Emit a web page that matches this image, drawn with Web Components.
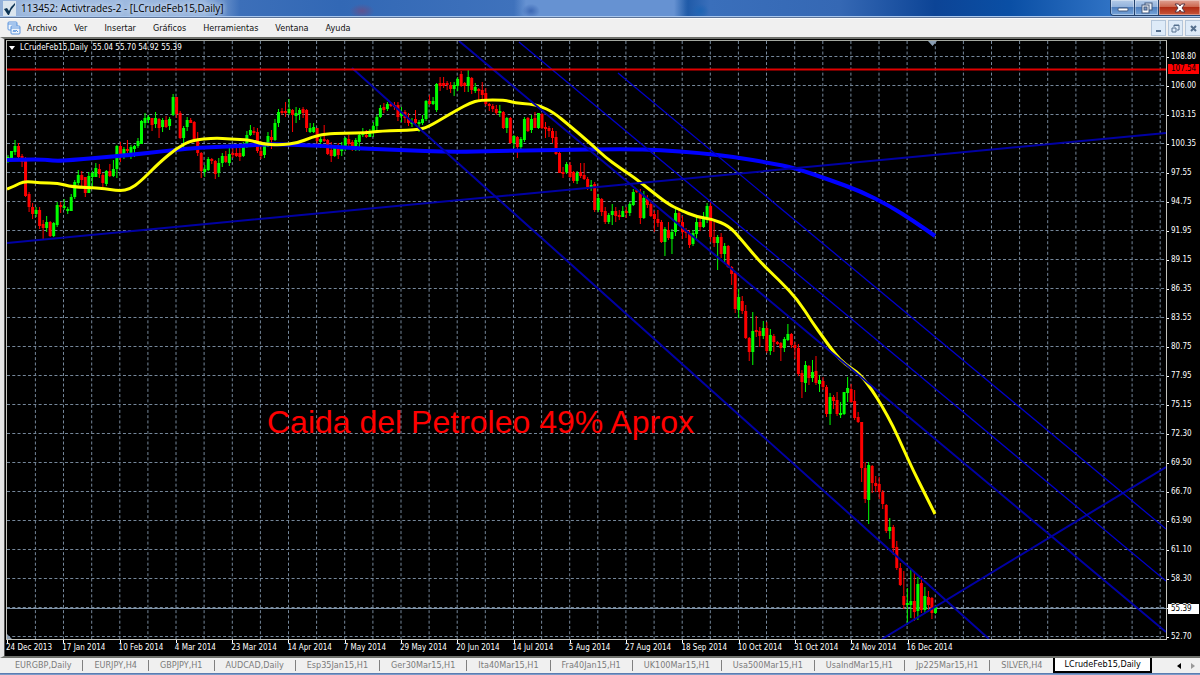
<!DOCTYPE html>
<html lang="es">
<head>
<meta charset="utf-8">
<title>113452: Activtrades-2 - [LCrudeFeb15,Daily]</title>
<style>
    html, body {
        height: 100%;
        margin: 0;
        overflow: hidden;
    }
    body {
        font-family: "Open Sans", "Noto Sans", sans-serif;
        background: #f0f0f0;
    }
</style>
</head>
<body>
<trading-terminal>
    <title-bar slot="title">113452: Activtrades-2 - [LCrudeFeb15,Daily]</title-bar>
    <menu-bar slot="menu" items="Archivo|Ver|Insertar|Gráficos|Herramientas|Ventana|Ayuda"></menu-bar>
    <price-chart slot="chart">
        <span slot="symbol">LCrudeFeb15,Daily&nbsp; 55.04 55.70 54.92 55.39</span>
        <span slot="note">Caida del Petroleo 49% Aprox</span>
    </price-chart>
    <chart-tabs slot="tabs" active="LCrudeFeb15,Daily" items="EURGBP,Daily|EURJPY,H4|GBPJPY,H1|AUDCAD,Daily|Esp35Jan15,H1|Ger30Mar15,H1|Ita40Mar15,H1|Fra40Jan15,H1|UK100Mar15,H1|Usa500Mar15,H1|UsaIndMar15,H1|Jp225Mar15,H1|SILVER,H4|LCrudeFeb15,Daily"></chart-tabs>
</trading-terminal>

<script>
class TradingTerminal extends HTMLElement {
    connectedCallback() {
        this.attachShadow({ mode: 'open' });
        this.shadowRoot.innerHTML = `
            <style>
                :host {
                    display: flex;
                    flex-direction: column;
                    height: 100vh;
                }
                .chart {
                    flex: 1;
                    min-height: 0;
                    display: flex;
                }
                .bottom {
                    height: 2px;
                    background: linear-gradient(#4a6ea6, #8eabd4);
                }
            </style>
            <slot name="title"></slot>
            <slot name="menu"></slot>
            <div class="chart"><slot name="chart"></slot></div>
            <slot name="tabs"></slot>
            <div class="bottom"></div>
        `;
    }
}

class TitleBar extends HTMLElement {
    connectedCallback() {
        this.attachShadow({ mode: 'open' });
        this.shadowRoot.innerHTML = `
            <style>
                :host {
                    display: flex;
                    align-items: center;
                    height: 17px;
                    padding-left: 3px;
                    border-bottom: 1px solid #5c7396;
                    box-shadow: inset 0 -1px #a9c6ec;
                    color: #000;
                    font-size: 10px;
                    line-height: 17px;
                    background:
                        radial-gradient(ellipse 14px 8px at 362px 11px, #5f5390 0%, transparent 90%),
                        radial-gradient(ellipse 10px 8px at 531px 11px, #3c68b4 0%, transparent 90%),
                        radial-gradient(ellipse 10px 8px at 700px 11px, #1d64b4 0%, transparent 90%),
                        linear-gradient(90deg, transparent 514px, #6692d2 526px, #6692d2 674px, transparent 688px),
                        linear-gradient(90deg, #93b0d9 0, #a5bfe2 60px, #94b2dc 205px, #3c6fb9 240px, #3268b5 340px, #3f72bc 515px, #1c58a6 685px, #3a6fbb 710px, #3568b4 840px, #0c4496 935px, #0a4fa5 1010px, #2f72c4 1110px, #6396d2 100%);
                }
                svg { display: block; }
                .logo {
                    width: 13px;
                    height: 15px;
                    margin-right: 5px;
                }
                .text {
                    flex: 1;
                    white-space: nowrap;
                    text-shadow: 0 0 5px #d8e4f4, 0 0 5px #d8e4f4;
                }
                .buttons {
                    display: flex;
                    align-self: flex-start;
                    height: 15px;
                    border: 1px solid #23426e;
                    border-top: 0;
                    border-right: 0;
                    border-radius: 0 0 0 4px;
                    overflow: hidden;
                }
                button {
                    display: flex;
                    align-items: center;
                    justify-content: center;
                    width: 24px;
                    padding: 0;
                    border: 0;
                    border-right: 1px solid #23426e;
                    box-shadow: inset 0 0 0 1px rgba(255, 255, 255, 0.35);
                    background: linear-gradient(#b3cae8 0, #93b3dc 45%, #4f7fbe 50%, #78a5d9 100%);
                }
                .close {
                    width: 41px;
                    border-right: 0;
                    background: linear-gradient(#dfa294 0, #cc6850 45%, #b02c14 50%, #c9563a 100%);
                }
            </style>
            <svg class="logo" viewBox="0 0 13 15">
                <rect width="13" height="15" fill="#dbe5ee"/>
                <path d="M1 8 L4 7 L6 10 Q8 5 12 2 L12 4 Q8 8 6 14 L5 14 Z" fill="#0d3454"/>
            </svg>
            <span class="text"><slot></slot></span>
            <div class="buttons">
                <button aria-label="Minimizar"><svg width="12" height="10" viewBox="0 0 12 10"><rect x="1" y="5" width="10" height="3" rx="1" fill="#fff" stroke="#43597c"/></svg></button>
                <button aria-label="Restaurar"><svg width="12" height="12" viewBox="0 0 12 12"><rect x="4" y="1" width="7" height="7" fill="#e8eef6" stroke="#43597c"/><rect x="1" y="3" width="7" height="8" fill="#fff" stroke="#43597c"/><rect x="3" y="5" width="3" height="3" fill="#7f9dc6" stroke="#43597c"/></svg></button>
                <button class="close" aria-label="Cerrar"><svg width="12" height="10" viewBox="0 0 12 10"><path d="M1 1h3.500l1.500 2 1.500-2h3.500l-3 4 3 4h-3.500l-1.500-2-1.500 2h-3.500l3-4z" fill="#fff" stroke="#5a3540"/></svg></button>
            </div>
        `;
    }
}

class MenuBar extends HTMLElement {
    connectedCallback() {
        this.attachShadow({ mode: 'open' });
        const items = this.getAttribute('items').split('|');
        this.shadowRoot.innerHTML = `
            <style>
                :host {
                    display: flex;
                    align-items: center;
                    height: 18px;
                    padding-left: 7px;
                    border-top: 1px solid #fafbfd;
                    background: #f0f0f0;
                    font-family: "DejaVu Sans Condensed", "DejaVu Sans", sans-serif;
                }
                .icon { margin-right: 6px; }
                nav {
                    flex: 1;
                    display: flex;
                    gap: 17px;
                }
                button {
                    padding: 0;
                    border: 0;
                    background: none;
                    color: #111;
                    font: inherit;
                    font-size: 9px;
                    line-height: 16px;
                }
                .mdi {
                    display: flex;
                    gap: 2px;
                }
                .mdi button {
                    display: flex;
                    align-items: center;
                    justify-content: center;
                    width: 15px;
                    height: 16px;
                    border: 1px solid #b4c6da;
                    background: #deebf8;
                }
                .mdi button:last-child { border-right: 0; }
            </style>
            <svg class="icon" width="14" height="14" viewBox="0 0 14 14" fill="#eef5fd" stroke="#5a94dd">
                <rect x="1" y="1" width="9" height="8" rx="1"/>
                <path d="M1 3h9" />
                <rect x="4" y="5" width="9" height="8" rx="1"/>
                <path d="M4 7h9M6 11l1-2 1 2 1-2 2 2" fill="none"/>
            </svg>
            <nav>${items.map(item => `<button>${item}</button>`).join('')}</nav>
            <div class="mdi">
                <button aria-label="Minimizar ventana"><svg width="9" height="9" viewBox="0 0 9 9"><path d="M2 7h5" stroke="#56708e" stroke-width="2"/></svg></button>
                <button aria-label="Restaurar ventana"><svg width="9" height="9" viewBox="0 0 9 9" fill="none" stroke="#56708e"><path d="M3 3V1h5v5H6M3 1.5h5"/><path d="M1 4h4v4H1z"/></svg></button>
                <button aria-label="Cerrar ventana"><svg width="9" height="9" viewBox="0 0 9 9"><path d="M2 2l5 5M7 2l-5 5" stroke="#56708e" stroke-width="2"/></svg></button>
            </div>
        `;
    }
}

// One bar per entry: direction, then high, low, body top and body bottom.
const BARS = `
g155 163 157 162,g151 158 151 158,g140 155 146 152,r143 158 146 157,r154 167 156 162,r157 197 161 196,r192 212 194 207,r203 219 207 214,
g207 217 210 214,r207 229 210 226,r220 239 224 228,g216 232 222 228,r221 237 222 236,g222 237 223 236,g202 227 205 225,r202 213 205 207,
g199 210 206 208,g207 214 209 211,g194 211 197 211,g180 199 182 197,g170 185 175 183,r171 188 175 180,r177 197 177 193,g172 193 176 193,
g171 187 173 177,g163 177 168 177,r164 178 169 174,r173 187 175 183,g170 186 171 184,r164 177 171 176,g160 177 169 176,g145 178 146 169,
r142 162 146 156,g147 159 149 156,r140 153 149 151,g145 159 147 155,g145 157 146 149,g138 148 141 146,g120 144 121 144,g113 128 118 123,
g115 123 117 120,r118 131 118 125,g112 128 118 124,r118 138 119 128,g118 132 120 127,r116 128 120 127,g117 130 119 126,g94 116 97 115,
r97 118 97 114,r111 139 113 138,g126 148 128 138,g117 131 120 127,r118 123 120 123,r121 140 122 139,r132 156 139 153,r152 178 153 171,
g165 177 169 172,g157 171 159 170,r158 164 159 161,r160 179 161 174,g158 177 163 173,g153 167 156 163,r151 163 156 162,g145 166 154 163,
r148 158 153 155,r145 157 153 156,r145 161 153 157,g142 157 145 156,g131 148 135 145,g125 136 130 135,r127 135 131 133,r128 153 132 151,
r141 159 151 156,g142 158 144 155,g132 147 136 145,r130 149 137 140,g119 141 123 140,g109 127 112 123,r108 115 111 113,r102 117 111 113,
g99 115 109 113,r109 132 110 115,g107 123 113 116,g108 120 110 114,r107 118 109 113,r109 132 110 128,g123 133 128 132,g123 133 127 132,
r128 145 128 141,g137 148 139 142,r125 142 139 141,r139 155 140 154,r142 162 150 156,g147 157 148 156,r143 159 148 155,g142 156 147 151,
g137 151 138 147,r135 148 139 144,r140 151 142 147,g138 151 140 146,g133 151 135 142,g128 137 133 135,r130 138 135 137,g129 137 131 137,
g122 137 126 131,g115 132 117 126,g105 118 108 117,r103 113 107 110,g102 111 104 109,r102 107 104 106,r102 110 105 107,r102 121 105 117,
g107 122 112 116,r110 123 112 118,r113 126 118 123,g118 127 122 124,r110 125 119 123,g120 132 122 124,g115 125 119 123,g100 121 101 119,
r95 105 101 104,g97 105 101 104,g83 112 84 110,r77 91 83 86,r77 88 83 86,r81 90 83 85,r82 93 85 89,g82 96 85 89,
g77 91 79 86,r71 87 74 86,r82 92 83 86,g70 92 77 86,r77 94 78 90,g83 93 87 91,r88 100 89 91,r82 100 90 95,
r88 106 93 104,r103 111 104 106,r104 112 106 109,r105 115 109 113,g105 117 111 113,r111 129 112 128,g117 133 118 128,r117 144 118 143,
g135 148 136 143,r136 158 137 147,g137 149 139 147,g117 142 119 140,r117 132 118 131,g115 133 119 130,r112 128 118 128,g113 129 113 128,
r113 129 114 128,r122 138 127 129,r126 137 128 131,r128 143 131 138,r131 155 137 154,r149 173 153 173,r167 178 172 174,g162 174 164 172,
r162 178 165 177,r171 183 172 181,g171 184 173 181,r163 178 172 176,r163 180 175 179,r177 190 179 187,g180 191 185 187,r182 212 184 210,
g194 212 198 210,r198 216 199 212,r207 224 211 222,g213 224 215 222,g204 225 211 215,r207 222 211 216,r210 220 215 217,g206 217 211 217,
r207 218 211 213,g202 216 204 213,g189 206 192 205,r189 193 190 192,r189 224 193 218,g191 219 198 218,r195 208 199 205,r200 217 204 216,
r211 232 214 219,r210 227 219 223,r220 243 222 242,g227 256 229 242,r222 240 230 238,g229 254 232 239,g208 236 213 232,r210 224 213 222,
r216 239 222 232,r228 238 230 233,r230 248 233 245,g230 246 233 244,g217 239 222 234,r217 231 222 227,g212 228 217 227,g203 223 206 220,
r201 242 206 237,r222 247 237 243,g235 270 237 243,r233 258 237 254,g243 264 246 254,r245 268 246 267,r266 285 267 274,r272 313 273 309,
g289 318 297 310,r296 314 301 311,r305 339 311 338,r337 361 338 352,g312 365 331 352,r316 337 330 332,r327 347 331 336,g321 339 328 336,
r322 353 328 351,g329 355 335 351,r334 352 336 342,r341 345 342 344,r342 361 343 348,g337 352 339 348,g324 341 334 340,r333 348 334 345,
r342 359 345 348,r344 376 348 374,r370 398 373 382,g361 392 365 383,r365 385 366 378,g360 382 372 378,r356 385 371 383,g375 392 380 384,
r377 390 381 387,r385 417 387 414,g393 425 397 414,r395 409 397 401,r392 416 400 414,g402 418 413 415,g392 415 392 414,g377 402 388 393,
r384 403 389 402,r390 420 401 418,r412 423 417 422,r422 482 422 468,r462 503 468 499,g462 524 465 500,r465 493 466 483,r476 492 483 486,
r477 499 484 492,r490 509 492 504,r504 533 505 531,g518 539 527 531,r525 555 527 548,r541 570 547 568,r563 586 568 585,r571 609 596 605,
g588 625 603 605,g569 618 601 605,r571 621 601 612,g577 620 584 611,r576 613 583 610,g587 613 596 610,r591 612 597 605,r597 619 598 613,
g605 614 607 613`;

const FAST_MA = '7,189 15,186 24,181 40,183 58,183 72,187 100,188 120,191 130,189 140,182 160,162 177,148 192,140 215,138 230,139 250,140 262,144 280,145 298,143 312,137 325,134 345,133 365,133 380,131 417,130 428,127 445,117 457,110 470,103 480,100 505,100 515,103 530,104 540,106 553,112 570,126 590,143 605,157 620,168 635,178 650,190 668,204 680,210 697,217 712,219 729,226 740,238 760,262 780,281 798,300 812,322 825,340 835,354 845,364 857,372 863,378 872,390 882,406 893,426 903,448 913,470 925,494 935,514';
const SLOW_MA = '7,160 40,159 55,161 72,160 95,158 130,155 165,151 195,148 215,147 240,146 270,144 300,145 325,146 350,148 400,150 450,152 500,151 550,150 625,149 660,150 700,153 735,157 770,163 795,168 830,180 860,191 890,206 915,222 935,236';

const DATES = ['24 Dec 2013', '17 Jan 2014', '10 Feb 2014', '4 Mar 2014', '23 Mar 2014', '14 Apr 2014', '7 May 2014', '29 May 2014', '20 Jun 2014', '14 Jul 2014', '5 Aug 2014', '27 Aug 2014', '18 Sep 2014', '10 Oct 2014', '31 Oct 2014', '24 Nov 2014', '16 Dec 2014'];
const PRICES = ['108.80', '106.00', '103.15', '100.35', '97.55', '94.75', '91.95', '89.15', '86.35', '83.55', '80.75', '77.95', '75.15', '72.30', '69.50', '66.70', '63.90', '61.10', '58.30', '55.50', '52.70'];

class PriceChart extends HTMLElement {
    drawGrid() {
        let d = '';
        for (let i = 1; i <= 41; i++) {
            d += `M${(7.3 + 28.12 * i).toFixed(1)} 41V639`;
        }
        for (let i = 0; i <= 20; i++) {
            d += `M7 ${56.5 + 29 * i}H1166`;
        }
        return d;
    }

    // Rounds the corners between the points of a moving average
    smooth(list) {
        const points = list.split(' ').map(point => point.split(',').map(Number));
        let d = `M${points[0]}`;
        for (let i = 1; i < points.length - 1; i++) {
            const [x, y] = points[i];
            const [nextX, nextY] = points[i + 1];
            d += `Q${x} ${y} ${(x + nextX) / 2} ${(y + nextY) / 2}`;
        }
        return d + `L${points[points.length - 1]}`;
    }

    drawBars() {
        return BARS.trim().split(',').map((bar, i) => {
            const entry = bar.trim();
            const [high, low, top, bottom] = entry.slice(1).split(' ').map(Number);
            const x = 8 + 3.513 * i;
            return `<g class="${entry[0]}">
                <rect x="${(x - 0.5).toFixed(2)}" y="${high}" width="1" height="${low - high}"/>
                <rect x="${(x - 1.5).toFixed(2)}" y="${top}" width="3" height="${bottom - top}"/>
            </g>`;
        }).join('');
    }

    connectedCallback() {
        this.attachShadow({ mode: 'open' });
        this.shadowRoot.innerHTML = `
            <style>
                :host {
                    flex: 1;
                    display: grid;
                    grid-template-columns: 1fr 33px;
                    grid-template-rows: 1fr 16px;
                    padding: 1px 0 0 2px;
                    border-left: 4px solid #e4e4e4;
                    border-top: 2px solid #6f716c;
                    border-bottom: 2px solid #6f716c;
                    box-shadow: inset 1px 0 #555;
                    background: #000;
                    color: #fff;
                    font-family: "DejaVu Sans Condensed", "DejaVu Sans", sans-serif;
                    font-size: 8px;
                    line-height: 10px;
                }
                .plot {
                    position: relative;
                    min-height: 0;
                    border: 1px solid #c4c4be;
                    border-top-color: #a4a8a0;
                }
                .plot svg {
                    position: absolute;
                    width: 100%;
                    height: 100%;
                }
                .r { fill: #f00; }
                .g { fill: #0f0; }
                .symbol {
                    position: absolute;
                    top: 2px;
                    left: 2px;
                    display: flex;
                    align-items: center;
                    gap: 5px;
                    white-space: nowrap;
                }
                .symbol i {
                    border: 3px solid transparent;
                    border-top: 4px solid #fff;
                    border-bottom: 0;
                }
                .note {
                    position: absolute;
                    top: 364px;
                    left: 260px;
                    color: #f00;
                    font: 32px/34px "Liberation Sans", Arial, sans-serif;
                    white-space: nowrap;
                }
                .prices {
                    grid-row: 1 / 3;
                    grid-column: 2;
                    position: relative;
                    display: flex;
                    flex-direction: column;
                    justify-content: space-between;
                    padding: 12px 0 14px;
                }
                .prices span {
                    display: flex;
                    align-items: center;
                    gap: 2px;
                }
                .prices span::before {
                    content: "";
                    width: 2px;
                    height: 1px;
                    background: #fff;
                }
                .prices b {
                    position: absolute;
                    left: 1px;
                    right: 1px;
                    padding-left: 3px;
                    font-weight: normal;
                }
                .level {
                    top: 24px;
                    background: #f00;
                    color: #000;
                }
                .bid {
                    bottom: 42px;
                    background: #fff;
                    color: #000;
                }
                .dates {
                    display: flex;
                    min-width: 0;
                }
                .dates span {
                    flex: 0 0 calc(800% / 165);
                    white-space: nowrap;
                }
                .dates span::before {
                    content: "";
                    display: block;
                    width: 1px;
                    height: 3px;
                    margin-left: 1px;
                    background: #fff;
                }
            </style>
            <div class="plot">
                <svg viewBox="7 41 1159 598" preserveAspectRatio="none" fill="none">
                    <path d="${this.drawGrid()}" stroke="#75879a" stroke-dasharray="3 2.27"/>
                    <path d="M7 608.5H1166" stroke="#7f93a8"/>
                    ${this.drawBars()}
                    <path d="${this.smooth(SLOW_MA)}" stroke="#00f" stroke-width="4"/>
                    <path d="${this.smooth(FAST_MA)}" stroke="#ff0" stroke-width="3"/>
                    <path d="M7 243L1166 133M459 41L1166 632M352 68L989 639M882 639L1166 467" stroke="#0000a4" stroke-width="2"/>
                    <path d="M519 42L1166 581M618 73L1166 529" stroke="#0000c8" stroke-width="1.3"/>
                    <path d="M7 69.5H1166" stroke="#e00000" stroke-width="2"/>
                    <path d="M928 41h9l-4.500 5zM7 634v5h5z" fill="#8a9db2"/>
                </svg>
                <div class="symbol"><i></i><slot name="symbol"></slot></div>
                <div class="note"><slot name="note"></slot></div>
            </div>
            <div class="prices">
                ${PRICES.map(price => `<span>${price}</span>`).join('')}
                <b class="level">107.54</b>
                <b class="bid">55.39</b>
            </div>
            <div class="dates">${DATES.map(date => `<span>${date}</span>`).join('')}</div>
        `;
    }
}

class ChartTabs extends HTMLElement {
    connectedCallback() {
        this.attachShadow({ mode: 'open' });
        const active = this.getAttribute('active');
        const items = this.getAttribute('items').split('|');
        this.shadowRoot.innerHTML = `
            <style>
                :host {
                    display: flex;
                    height: 15px;
                    padding-left: 4px;
                    background: #f0f0f0;
                    font-family: "DejaVu Sans Condensed", "DejaVu Sans", sans-serif;
                }
                .tabs {
                    flex: 1;
                    display: flex;
                    align-items: center;
                }
                button {
                    padding: 0 11px;
                    border: 0;
                    border-right: 1px solid #808080;
                    background: none;
                    color: #7b7b7b;
                    font: inherit;
                    font-size: 9px;
                    line-height: 11px;
                    white-space: nowrap;
                }
                button:nth-last-child(2) { border-right: 0; }
                button.active {
                    align-self: stretch;
                    border: 2px solid #000;
                    border-top: 0;
                    padding: 0 9px;
                    background: #fff;
                    color: #000;
                }
                .scroll {
                    display: flex;
                    align-items: center;
                }
                .scroll button {
                    padding: 0 5px;
                    border: 0;
                }
                .scroll svg { display: block; }
            </style>
            <div class="tabs">
                ${items.map(item => `<button${item === active ? ' class="active"' : ''}>${item}</button>`).join('')}
            </div>
            <div class="scroll">
                <button aria-label="Anterior"><svg width="4" height="6" viewBox="0 0 4 6"><path d="M4 0v6L0 3z" fill="#000"/></svg></button>
                <button aria-label="Siguiente"><svg width="4" height="6" viewBox="0 0 4 6"><path d="M0 0v6l4-3z" fill="#999"/></svg></button>
            </div>
        `;
    }
}

customElements.define('trading-terminal', TradingTerminal);
customElements.define('title-bar', TitleBar);
customElements.define('menu-bar', MenuBar);
customElements.define('price-chart', PriceChart);
customElements.define('chart-tabs', ChartTabs);
</script>
</body>
</html>
